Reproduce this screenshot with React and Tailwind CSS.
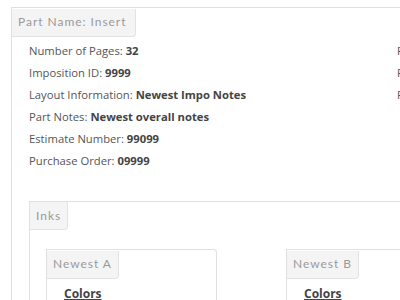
const legendFont = { fontFamily: 'Lato, "DejaVu Sans", sans-serif' };

function Legend({ children, className = "" }) {
    return (
        <div
            style={legendFont}
            className={`inline-flex items-center whitespace-nowrap h-[28px] px-[6px] bg-[#f4f4f4] border-r border-b border-[#e3e3e3] rounded-br-[4px] text-[12px] text-[#9a9a9a] tracking-[0.08em] ${className}`}
        >
            {children}
        </div>
    );
}

function Row({ label, value }) {
    return (
        <div className="h-[22px] leading-[22px] whitespace-nowrap">
            {label}: <span className="font-bold text-[#444]">{value}</span>
        </div>
    );
}

function InkBox({ name }) {
    return (
        <div className="w-[171px] shrink-0 h-[80px] border-l border-t border-r border-[#e0e0e0] rounded-tr-[4px]">
            <Legend className="h-[27px]">{name}</Legend>
            <div className="pl-[17px] pt-[1px]">
                <span className="font-bold text-[#444] underline text-[12px]">Colors</span>
            </div>
        </div>
    );
}

export default function App() {
    return (
        <div
            className="w-[400px] h-[300px] overflow-hidden bg-white pl-[11px] pt-[7px]"
            style={{ fontFamily: '"Open Sans", "Liberation Sans", sans-serif' }}
        >
            <div className="w-[460px] h-[400px] border-l border-t border-[#e0e0e0]">
                <Legend className="w-[124px]">Part Name: Insert</Legend>
                <div className="flex pl-[17px] pt-[3px] text-[11.25px] text-[#555]">
                    <div className="w-[368px] shrink-0">
                        <Row label="Number of Pages" value="32" />
                        <Row label="Imposition ID" value="9999" />
                        <Row label="Layout Information" value="Newest Impo Notes" />
                        <Row label="Part Notes" value="Newest overall notes" />
                        <Row label="Estimate Number" value="99099" />
                        <Row label="Purchase Order" value="09999" />
                    </div>
                    <div className="shrink-0">
                        <Row label="Folding" value="Yes" />
                        <Row label="Finishing" value="None" />
                        <Row label="Format" value="Flat" />
                    </div>
                </div>
                <div className="ml-[17px] mt-[29px] border-l border-t border-[#e0e0e0] h-[200px]">
                    <Legend className="w-[38px]">Inks</Legend>
                    <div className="flex gap-[69px] pl-[16px] pt-[19px]">
                        <InkBox name="Newest A" />
                        <InkBox name="Newest B" />
                    </div>
                </div>
            </div>
        </div>
    );
}
